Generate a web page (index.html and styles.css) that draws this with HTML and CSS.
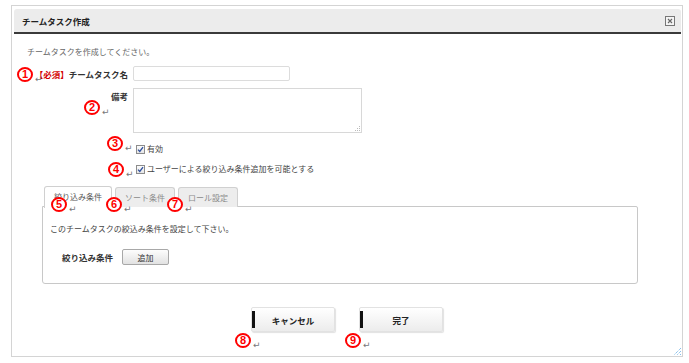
FILE: index.html
```html
<!DOCTYPE html>
<html lang="ja">
<head>
<meta charset="utf-8">
<title>チームタスク作成</title>
<link rel="stylesheet" href="styles.css">
</head>
<body>
<div class="dialog">
  <div class="header">
    <span class="title">チームタスク作成</span>
    <svg class="close" width="10" height="10" viewBox="0 0 10 10"><rect x="0.5" y="0.5" width="9" height="9" fill="#f4f4f4" stroke="#777"/><path d="M3 3 L7 7 M7 3 L3 7" stroke="#666" stroke-width="1.1"/></svg>
  </div>
  <div class="intro">チームタスクを作成してください。</div>
  <div class="form">
    <div class="row row-name">
      <div class="label"><span class="req">【必須】</span>チームタスク名</div>
      <div class="field"><input class="text" type="text"></div>
    </div>
    <div class="row row-note">
      <div class="label label-top">備考</div>
      <div class="field area-wrap"><textarea class="area"></textarea><svg class="area-grip" width="5" height="5" viewBox="0 0 5 5"><rect x="4" y="0" width="1" height="1" fill="#bbb"/><rect x="2" y="2" width="1" height="1" fill="#bbb"/><rect x="4" y="2" width="1" height="1" fill="#bbb"/><rect x="0" y="4" width="1" height="1" fill="#bbb"/><rect x="2" y="4" width="1" height="1" fill="#bbb"/><rect x="4" y="4" width="1" height="1" fill="#bbb"/></svg></div>
    </div>
    <div class="row row-check1">
      <div class="label"></div>
      <div class="field check"><span class="box"><svg width="7" height="7" viewBox="0 0 7 7"><path d="M1 3.6 L2.8 5.5 L6 1.2" fill="none" stroke="#2d4f9e" stroke-width="1.3"/></svg></span>有効</div>
    </div>
    <div class="row row-check2">
      <div class="label"></div>
      <div class="field check"><span class="box"><svg width="7" height="7" viewBox="0 0 7 7"><path d="M1 3.6 L2.8 5.5 L6 1.2" fill="none" stroke="#2d4f9e" stroke-width="1.3"/></svg></span>ユーザーによる絞り込み条件追加を可能とする</div>
    </div>
  </div>
  <div class="tabs">
    <div class="tab active">絞り込み条件</div>
    <div class="tab">ソート条件</div>
    <div class="tab">ロール設定</div>
  </div>
  <div class="panel">
    <div class="panel-text">このチームタスクの絞込み条件を設定して下さい。</div>
    <div class="filter-row">
      <span class="filter-label">絞り込み条件</span>
      <button class="add">追加</button>
    </div>
  </div>
  <div class="actions">
    <button class="btn">キャンセル</button>
    <button class="btn">完了</button>
  </div>
  <svg class="grip" width="9" height="9" viewBox="0 0 9 9"><path d="M8 1 L1 8 M8 4 L4 8 M8 7 L7 8" stroke="#5aa9e6" stroke-width="1" stroke-dasharray="1 1"/></svg>
</div>

<div class="mark m1"><span class="num">1</span><span class="ret">↵</span></div>
<div class="mark m2"><span class="num">2</span><span class="ret">↵</span></div>
<div class="mark m3"><span class="num">3</span><span class="ret">↵</span></div>
<div class="mark m4"><span class="num">4</span><span class="ret">↵</span></div>
<div class="mark m5"><span class="num">5</span><span class="ret">↵</span></div>
<div class="mark m6"><span class="num">6</span><span class="ret">↵</span></div>
<div class="mark m7"><span class="num">7</span><span class="ret">↵</span></div>
<div class="mark m8"><span class="num">8</span><span class="ret">↵</span></div>
<div class="mark m9"><span class="num">9</span><span class="ret">↵</span></div>
</body>
</html>
```
FILE: styles.css
```css
html, body {
  margin: 0;
  padding: 0;
  background: #fff;
}
body {
  position: relative;
  width: 689px;
  height: 363px;
  overflow: hidden;
  font-family: "Noto Sans CJK JP", "Noto Sans", sans-serif;
  font-size: 8px;
  color: #444;
}
.dialog {
  position: relative;
  margin: 5px 0 0 11px;
  width: 672px;
  height: 352px;
  box-sizing: border-box;
  border: 1px solid #d4d4d4;
}
.header {
  margin: 3px 1px 0 2px;
  height: 23px;
  background: #ececec;
  border-bottom: 2px solid #3a3a3a;
  border-radius: 3px 3px 0 0;
  display: flex;
  align-items: center;
  justify-content: space-between;
  padding: 0 6px 0 8px;
}
.title {
  font-weight: bold;
  font-size: 8.5px;
  color: #222;
}
.close { display: block; }
.intro {
  margin-top: 12px;
  padding-left: 15px;
  line-height: 12px;
  color: #666;
}
.form {
  display: flex;
  flex-direction: column;
}
.row {
  display: flex;
  align-items: center;
  gap: 5px;
}
.label {
  width: 116px;
  text-align: right;
  font-weight: bold;
  color: #333;
  font-size: 8.5px;
  line-height: 12px;
}
.req { color: #d40000; }
.row-name { margin-top: 8px; }
.row-note { margin-top: 7px; align-items: flex-start; }
.label-top { padding-top: 2px; }
.row-check1 { margin-top: 10px; }
.row-check2 { margin-top: 8px; }
.text {
  display: block;
  width: 157px;
  height: 15px;
  box-sizing: border-box;
  border: 1px solid #dcdcdc;
  border-radius: 2px;
  margin: 0;
  padding: 0 3px;
}
.area-wrap { position: relative; }
.area {
  display: block;
  width: 229px;
  height: 45px;
  box-sizing: border-box;
  border: 1px solid #d8d8d8;
  margin: 0;
  padding: 2px;
  resize: none;
}
.area-grip {
  position: absolute;
  right: 2px;
  bottom: 2px;
}
.check {
  display: flex;
  align-items: center;
  line-height: 12px;
  color: #444;
  padding-left: 3px;
}
.box {
  width: 9px;
  height: 9px;
  box-sizing: border-box;
  border: 1px solid #8c8c8c;
  background: linear-gradient(#fbfbfb, #e6e6e6);
  display: flex;
  align-items: center;
  justify-content: center;
  margin-right: 2px;
}
.box svg { display: block; }
.tabs {
  margin: 10px 0 0 32px;
  display: flex;
  align-items: flex-end;
  gap: 3px;
  height: 22px;
  position: relative;
  z-index: 1;
}
.tab {
  height: 20px;
  box-sizing: border-box;
  padding: 0 9px;
  border: 1px solid #d0d0d0;
  border-bottom: none;
  border-radius: 3px 3px 0 0;
  background: #ededed;
  color: #8a8a8a;
  line-height: 19px;
}
.tab.active {
  height: 22px;
  background: #fff;
  color: #555;
  line-height: 20px;
  margin-bottom: -1px;
}
.panel {
  margin: -1px 0 0 30px;
  width: 596px;
  height: 78px;
  box-sizing: border-box;
  border: 1px solid #c8c8c8;
  border-radius: 0 2px 3px 3px;
  padding: 16px 0 0 7px;
}
.panel-text {
  line-height: 12px;
  color: #444;
}
.filter-row {
  margin-top: 14px;
  padding-left: 12px;
  display: flex;
  align-items: center;
  gap: 9px;
}
.filter-label {
  font-weight: bold;
  color: #333;
  font-size: 8.5px;
}
.add {
  width: 47px;
  height: 16px;
  box-sizing: border-box;
  border: 1px solid #a8a8a8;
  border-radius: 2px;
  background: linear-gradient(#fdfdfd, #e2e2e2);
  font-family: inherit;
  font-size: 8px;
  color: #333;
  padding: 0;
  margin: 0;
}
.actions {
  margin-top: 23px;
  display: flex;
  justify-content: center;
  gap: 24px;
}
.btn {
  position: relative;
  width: 84px;
  height: 25px;
  box-sizing: border-box;
  border: 1px solid #e2e2e2;
  border-radius: 2px;
  background: linear-gradient(#ffffff, #ececec);
  box-shadow: 1px 1px 1px rgba(0,0,0,0.12);
  font-family: inherit;
  font-weight: bold;
  font-size: 8.5px;
  color: #222;
  padding: 0;
  margin: 0;
}
.btn::before {
  content: "";
  position: absolute;
  left: 0;
  top: 3px;
  width: 3px;
  height: 17px;
  background: #111;
}
.grip {
  position: absolute;
  right: 0;
  bottom: 0;
}
.mark {
  position: absolute;
  z-index: 5;
  display: flex;
  align-items: flex-end;
}
.num {
  width: 16px;
  height: 15px;
  box-sizing: border-box;
  border: 2px solid #f00;
  border-radius: 50%;
  color: #f00;
  font-family: "Liberation Sans", Arial, sans-serif;
  font-weight: bold;
  font-size: 11px;
  line-height: 11px;
  text-align: center;
  background: #fff;
}
.ret {
  font-family: "DejaVu Sans", sans-serif;
  font-size: 9px;
  color: #777;
  line-height: 9px;
  margin-left: 2px;
  margin-bottom: -2px;
}
.m1 { left: 17px; top: 67px; }
.m2 { left: 84px; top: 100px; }
.m3 { left: 107px; top: 136px; }
.m4 { left: 108px; top: 162px; }
.m5 { left: 51px; top: 197px; }
.m6 { left: 106px; top: 197px; }
.m7 { left: 167px; top: 197px; }
.m8 { left: 235px; top: 333px; }
.m9 { left: 345px; top: 333px; }
```
